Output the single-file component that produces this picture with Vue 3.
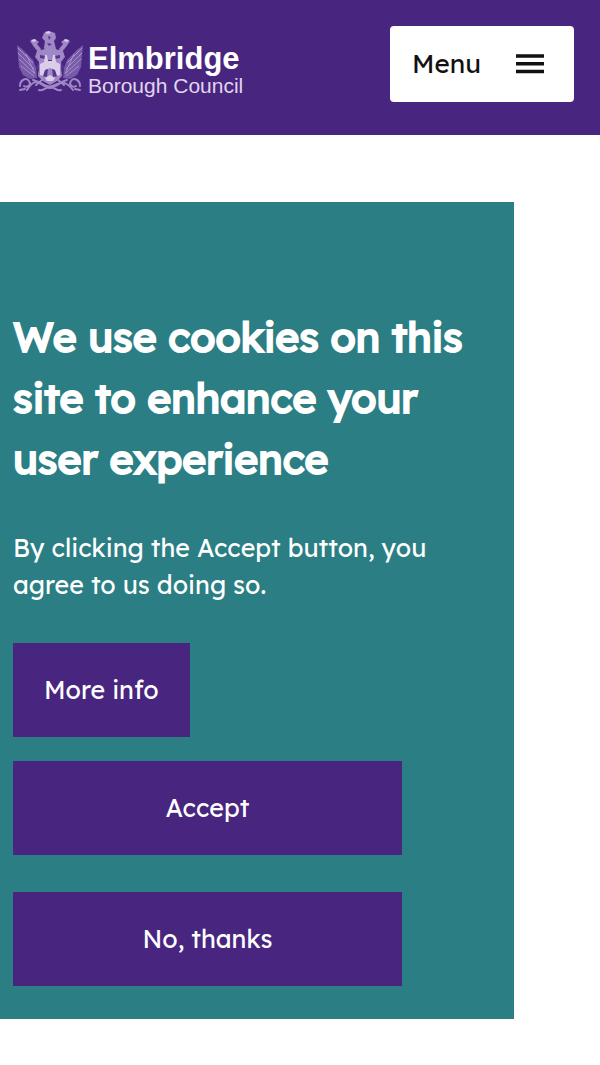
<script setup>
import { ref } from 'vue'

const bannerOpen = ref(true)
const menuOpen = ref(false)
</script>

<template>
  <div class="page">
    <header class="site-header">
      <a class="brand" href="#" aria-label="Elmbridge Borough Council home">
        <svg class="crest" viewBox="0 0 66 66" aria-hidden="true">
          <g fill="#a088c6">
            <path d="M27 3l5-2 6 2 1 5-2 3 2 8-3 4h-6l-3-5 1-7-3-3z" />
            <path d="M13 11l5-2 4 3-2 2 4 5-2 4-5-6z" />
            <path d="M53 11l-5-2-4 3 2 2-4 5 2 4 5-6z" />
            <path d="M20 21l8-2 5 3 5-3 8 2 2 6-4 5 1 14-5 5-7 4-7-4-5-5 1-14-4-5z" />
          </g>
          <g fill="#775aa8">
            <path d="M0 15l5 4 5 5 6 6 3 8 1 10-7 1-7-4-4-8z" />
            <path d="M66 15l-5 4-5 5-6 6-3 8-1 10 7 1 7-4 4-8z" />
          </g>
          <g fill="none" stroke="#a892cb" stroke-width="1">
            <path d="M1 18l15 15M1 23l16 16M2 29l15 14M4 36l13 10M9 24l9 20" />
            <path d="M65 18L50 33M65 23L49 39M64 29L49 43M62 36L49 46M57 24l-9 20" />
          </g>
          <g fill="#573590">
            <path d="M23 25l6 1-1 3-5-1zM43 25l-6 1 1 3 5-1zM31 30h4v3h-4z" />
            <path d="M25 46l3-7 3-1-1 9zM41 46l-3-7-3-1 1 9z" />
            <path d="M31 6l3 1-2 3zM30 13l5 1-3 2z" />
            <path d="M22 32l-3 5 3 5zM44 32l3 5-3 5z" />
          </g>
          <g fill="#dacdea">
            <path d="M28 2l4-1 2 2-4 1zM14 10l4-1 1 2-3 1zM52 10l-4-1-1 2 3 1z" />
            <path d="M23 34l4-2 1-7 2 0 1 6 4 0 1-6 2 0 1 7 4 2 0 11-3 1-2-6-5-2-5 2-2 6-3-1z" />
            <path d="M28 48l5-3 5 3-2 3h-6z" />
          </g>
          <g fill="none" stroke="#a088c6" stroke-width="2" stroke-linecap="round">
            <path d="M3 56c0-6 6-9 9-5s-2 7-5 5M63 56c0-6-6-9-9-5s2 7 5 5" />
            <path d="M10 60c5-8 9-10 14-7s8 5 14 2 10-5 18 5" />
            <path d="M16 50c6 1 11 8 17 8s11-7 17-8M22 60c4 2 6-3 11-3s7 5 11 3" />
            <path d="M3 60l5-1M63 60l-5-1M26 49l-7 6M40 49l7 6" />
          </g>
        </svg>
        <span class="brand-text">
          <span class="brand-name">Elmbridge</span>
          <span class="brand-sub">Borough Council</span>
        </span>
      </a>
      <button class="menu" type="button" :aria-expanded="menuOpen" @click="menuOpen = !menuOpen">
        <span>Menu</span>
        <svg class="bars" viewBox="0 0 28 20" aria-hidden="true">
          <path d="M0 2h28M0 9.7h28M0 17.4h28" stroke="#111" stroke-width="3.5" />
        </svg>
      </button>
    </header>

    <section v-if="bannerOpen" class="banner" aria-labelledby="cookie-title">
      <h2 id="cookie-title">We use cookies on this site to enhance your user experience</h2>
      <p>By clicking the Accept button, you agree to us doing so.</p>
      <button class="action" type="button">More info</button>
      <div class="choices">
        <button class="action" type="button" @click="bannerOpen = false">Accept</button>
        <button class="action" type="button" @click="bannerOpen = false">No, thanks</button>
      </div>
    </section>
  </div>
</template>

<style>
body {
  margin: 0;
  background: #fff;
}
</style>

<style scoped>
.page {
  font-family: Lexend, Inter, "Open Sans", sans-serif;
  font-size: 25px;
  color: #fff;
}
.site-header {
  display: flex;
  align-items: flex-start;
  justify-content: space-between;
  box-sizing: border-box;
  min-height: 135px;
  padding: 26px 26px 32px 17px;
  background: #482680;
}
.brand {
  display: flex;
  gap: 5px;
  padding-top: 4px;
  color: #fff;
  text-decoration: none;
  font-family: "Liberation Sans", Arial, sans-serif;
}
.crest {
  width: 66px;
  height: 66px;
}
.brand-text {
  display: flex;
  flex-direction: column;
  padding-top: 13px;
}
.brand-name {
  font-size: 31px;
  line-height: 32px;
  font-weight: 700;
}
.brand-sub {
  font-size: 21px;
  line-height: 22px;
  color: #e0d5ed;
}
button {
  border: 0;
  font: inherit;
  cursor: pointer;
}
.menu {
  display: flex;
  align-items: center;
  gap: 35px;
  height: 76px;
  padding: 0 30px 1px 22px;
  border-radius: 4px;
  background: #fff;
  color: #111;
  font-size: 26px;
}
.bars {
  width: 28px;
  height: 20px;
}
.banner {
  margin: 67px 86px 0 0;
  padding: 104px 13px 33px;
  background: #2a7e84;
}
h2 {
  margin: 0 0 40px;
  font-size: 41px;
  line-height: 61px;
  font-weight: 400;
  -webkit-text-stroke: 2px #fff;
}
p {
  margin: 0 0 40px;
  line-height: 37px;
}
.action {
  display: block;
  min-height: 94px;
  padding: 0 31px 1px;
  background: #482680;
  color: #fff;
}
.choices {
  display: grid;
  gap: 37px;
  margin: 24px 99px 0 0;
}
</style>
